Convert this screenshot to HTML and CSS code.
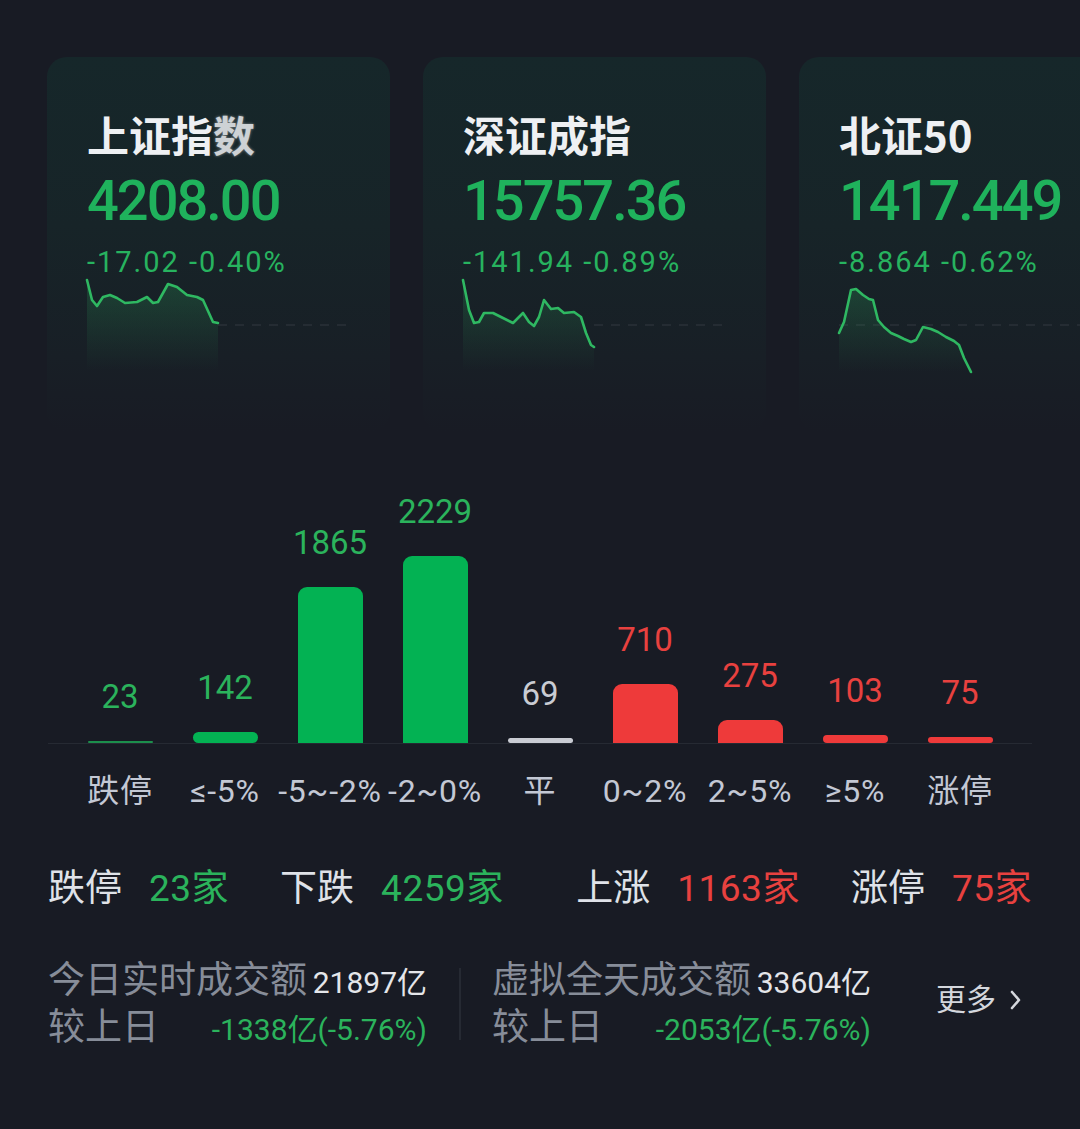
FILE: index.html
```html
<!DOCTYPE html>
<html lang="zh-CN">
<head>
<meta charset="utf-8">
<title>行情</title>
<link rel="stylesheet" href="styles.css">
</head>
<body>
<div class="page">
  <div class="cards">
    <div class="card">
      <div class="card-title">上证指<span class="smudge">数</span></div>
      <div class="card-price">4208.00</div>
      <div class="card-change">-17.02 -0.40%</div>
      <svg class="spark" width="265" height="100" viewBox="0 0 265 100">
        <defs>
          <linearGradient id="f1" x1="0" y1="0" x2="0" y2="1">
            <stop offset="0" stop-color="#2fb864" stop-opacity="0.22"/>
            <stop offset="1" stop-color="#2fb864" stop-opacity="0"/>
          </linearGradient>
        </defs>
        <line x1="131" y1="50" x2="265" y2="50" class="dash"/>
        <path d="M0,5 L5,25 L10,31 L16,22 L23,20 L30,23 L38,28 L50,27 L60,22 L66,28 L71,27 L81,9 L90,12 L100,20 L110,22 L116,25 L126,47 L131,48 L131,96 L0,96 Z" fill="url(#f1)"/>
        <path d="M0,5 L5,25 L10,31 L16,22 L23,20 L30,23 L38,28 L50,27 L60,22 L66,28 L71,27 L81,9 L90,12 L100,20 L110,22 L116,25 L126,47 L131,48" class="line"/>
      </svg>
    </div>
    <div class="card">
      <div class="card-title">深证成指</div>
      <div class="card-price">15757.36</div>
      <div class="card-change">-141.94 -0.89%</div>
      <svg class="spark" width="265" height="100" viewBox="0 0 265 100">
        <defs>
          <linearGradient id="f2" x1="0" y1="0" x2="0" y2="1">
            <stop offset="0" stop-color="#2fb864" stop-opacity="0.22"/>
            <stop offset="1" stop-color="#2fb864" stop-opacity="0"/>
          </linearGradient>
        </defs>
        <line x1="131" y1="50" x2="265" y2="50" class="dash"/>
        <path d="M0,5 L6,35 L11,48 L16,47 L21,38 L30,38 L38,42 L50,48 L60,38 L66,47 L71,51 L76,42 L81,25 L88,34 L95,33 L101,38 L111,37 L118,42 L123,58 L128,70 L131,72 L131,96 L0,96 Z" fill="url(#f2)"/>
        <path d="M0,5 L6,35 L11,48 L16,47 L21,38 L30,38 L38,42 L50,48 L60,38 L66,47 L71,51 L76,42 L81,25 L88,34 L95,33 L101,38 L111,37 L118,42 L123,58 L128,70 L131,72" class="line"/>
      </svg>
    </div>
    <div class="card">
      <div class="card-title">北证50</div>
      <div class="card-price">1417.449</div>
      <div class="card-change">-8.864 -0.62%</div>
      <svg class="spark" width="265" height="100" viewBox="0 0 265 100">
        <defs>
          <linearGradient id="f3" x1="0" y1="0" x2="0" y2="1">
            <stop offset="0" stop-color="#2fb864" stop-opacity="0.22"/>
            <stop offset="1" stop-color="#2fb864" stop-opacity="0"/>
          </linearGradient>
        </defs>
        <line x1="0" y1="50" x2="265" y2="50" class="dash"/>
        <path d="M0,58 L5,47 L12,15 L17,14 L24,20 L30,24 L34,25 L39,45 L45,52 L52,58 L59,61 L65,64 L72,67 L77,65 L84,52 L92,54 L99,57 L107,62 L115,66 L120,70 L125,83 L132,97 L0,97 Z" fill="url(#f3)"/>
        <path d="M0,58 L5,47 L12,15 L17,14 L24,20 L30,24 L34,25 L39,45 L45,52 L52,58 L59,61 L65,64 L72,67 L77,65 L84,52 L92,54 L99,57 L107,62 L115,66 L120,70 L125,83 L132,97" class="line"/>
      </svg>
    </div>
  </div>

  <div class="chart">
    <div class="bars">
      <div class="col"><span class="val green">23</span><div class="bar bar-green bar-thin" style="height:2px"></div></div>
      <div class="col"><span class="val green">142</span><div class="bar bar-green bar-pill" style="height:11px"></div></div>
      <div class="col"><span class="val green">1865</span><div class="bar bar-green" style="height:156px"></div></div>
      <div class="col"><span class="val green">2229</span><div class="bar bar-green" style="height:187px"></div></div>
      <div class="col"><span class="val grey">69</span><div class="bar bar-grey bar-pill" style="height:5px"></div></div>
      <div class="col"><span class="val red">710</span><div class="bar bar-red" style="height:59px"></div></div>
      <div class="col"><span class="val red">275</span><div class="bar bar-red" style="height:23px"></div></div>
      <div class="col"><span class="val red">103</span><div class="bar bar-red bar-pill" style="height:8px"></div></div>
      <div class="col"><span class="val red">75</span><div class="bar bar-red bar-pill" style="height:6px"></div></div>
    </div>
    <div class="axis-labels">
      <span>跌停</span>
      <span>≤-5%</span>
      <span>-5~-2%</span>
      <span>-2~0%</span>
      <span>平</span>
      <span>0~2%</span>
      <span>2~5%</span>
      <span>≥5%</span>
      <span>涨停</span>
    </div>
  </div>

  <div class="stats">
    <div class="stats-half">
      <div class="stat"><span class="stat-label">跌停</span><span class="stat-value green">23家</span></div>
      <div class="stat"><span class="stat-label">下跌</span><span class="stat-value green">4259家</span></div>
    </div>
    <div class="stats-half">
      <div class="stat"><span class="stat-label">上涨</span><span class="stat-value red">1163家</span></div>
      <div class="stat"><span class="stat-label">涨停</span><span class="stat-value red">75家</span></div>
    </div>
  </div>

  <div class="turnover">
    <div class="block">
      <div class="row"><span class="t-label">今日实时成交额</span><span class="t-value">21897亿</span></div>
      <div class="row"><span class="t-label">较上日</span><span class="t-value green">-1338亿(-5.76%)</span></div>
    </div>
    <div class="divider"></div>
    <div class="block">
      <div class="row"><span class="t-label">虚拟全天成交额</span><span class="t-value">33604亿</span></div>
      <div class="row"><span class="t-label">较上日</span><span class="t-value green">-2053亿(-5.76%)</span></div>
    </div>
    <div class="more">更多<svg class="chev" width="12" height="20" viewBox="0 0 12 20"><path d="M2,2 L9,10 L2,18" fill="none" stroke="#d4d7dd" stroke-width="2.6" stroke-linecap="round" stroke-linejoin="round"/></svg></div>
  </div>
</div>
</body>
</html>
```

FILE: styles.css
```css
html, body {
  margin: 0;
  padding: 0;
  width: 1080px;
  height: 1129px;
  overflow: hidden;
  background: #181b24;
}

.page {
  font-family: "Roboto", "Noto Sans CJK SC", sans-serif;
  color: #dfe2e8;
}

.cards {
  display: flex;
  gap: 33px;
  padding: 57px 0 0 47px;
  overflow: hidden;
}

.card {
  flex: 0 0 343px;
  height: 375px;
  box-sizing: border-box;
  padding: 56px 0 0 40px;
  border-radius: 20px;
  background: linear-gradient(180deg, #16272a 0%, #172428 45%, #181f26 80%, #181b24 100%);
  overflow: hidden;
}

.card-title {
  font-family: "Noto Sans CJK SC", sans-serif;
  font-weight: 700;
  font-size: 42px;
  line-height: 42px;
  color: #eef0f3;
  white-space: nowrap;
}

.smudge {
  opacity: 0.85;
  text-shadow: 0 0 3px rgba(238, 240, 243, 0.6);
}

.card-price {
  margin-top: 18px;
  font-size: 56px;
  line-height: 56px;
  font-weight: 500;
  letter-spacing: -2px;
  color: #1fb25c;
  white-space: nowrap;
}

.card-change {
  margin-top: 19px;
  font-size: 29px;
  line-height: 29px;
  letter-spacing: 2px;
  color: #27b35f;
  white-space: nowrap;
}

.spark {
  display: block;
  margin-top: -2px;
  overflow: visible;
}

.spark .line {
  fill: none;
  stroke: #2fb862;
  stroke-width: 2.6;
  stroke-linejoin: round;
  stroke-linecap: round;
}

.spark .dash {
  stroke: #2a3038;
  stroke-width: 1.5;
  stroke-dasharray: 9 8;
}

.chart {
  margin: 51px 48px 0;
}

.bars {
  display: grid;
  grid-template-columns: repeat(9, 1fr);
  height: 260px;
  padding: 0 19.5px;
  border-bottom: 1px solid #262a33;
}

.col {
  display: flex;
  flex-direction: column;
  align-items: center;
  justify-content: flex-end;
}

.val {
  font-size: 33px;
  line-height: 33px;
  margin-bottom: 28px;
}

.green { color: #2bb35c; }
.red { color: #e8413f; }
.grey { color: #c9ccd3; }

.bar {
  width: 65px;
  border-radius: 9px 9px 0 0;
}

.bar-green { background: #03b253; }
.bar-red { background: #ee3a3a; }
.bar-grey { background: #c9ccd3; }

.bar-pill { border-radius: 6px; }
.bar-thin { border-radius: 1px; background: #1c8f4c; }

.axis-labels {
  display: grid;
  grid-template-columns: repeat(9, 1fr);
  padding: 0 19.5px;
  margin-top: 31px;
  font-size: 32px;
  line-height: 32px;
  letter-spacing: 0.8px;
  color: #c3c8d4;
  text-align: center;
  white-space: nowrap;
}

.axis-labels span {
  display: flex;
  justify-content: center;
}

.stats {
  display: flex;
  justify-content: space-between;
  margin: 63px 48px 0;
  font-size: 37px;
  line-height: 37px;
}

.stats-half {
  display: flex;
  gap: 51px;
}

.stat {
  display: flex;
  gap: 27px;
}

.stat-label { color: #dfe2e8; }

.stat-value { letter-spacing: 0.5px; }

.turnover {
  display: flex;
  align-items: center;
  margin: 50px 0 0 48px;
}

.block {
  width: 379px;
  display: flex;
  flex-direction: column;
}

.row {
  display: flex;
  justify-content: space-between;
  align-items: baseline;
  height: 47px;
  line-height: 47px;
  white-space: nowrap;
}

.t-label {
  font-size: 37px;
  color: #878d99;
}

.t-value {
  font-size: 30px;
  color: #e4e6ea;
}

.t-value.green { color: #2bb35c; }

.divider {
  width: 2px;
  height: 72px;
  margin: 0 31px 0 32px;
  background: #262a33;
}

.more {
  margin-left: auto;
  margin-right: 58px;
  margin-bottom: 8px;
  display: flex;
  align-items: center;
  gap: 14px;
  font-size: 30px;
  line-height: 30px;
  color: #d4d7dd;
}

.chev {
  display: block;
}
```
